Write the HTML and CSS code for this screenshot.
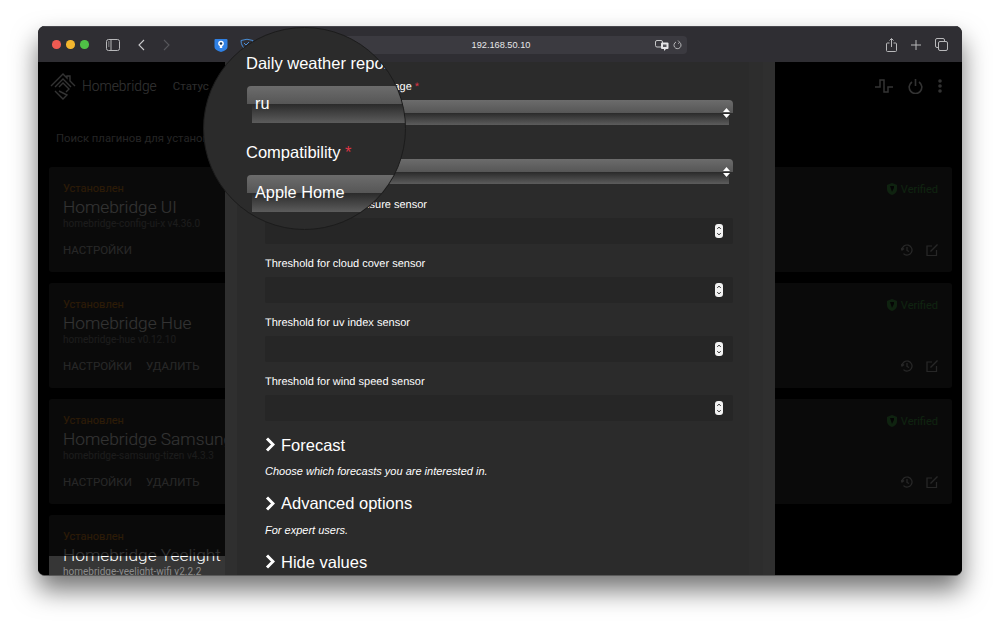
FILE: index.html
```html
<!DOCTYPE html>
<html lang="ru">
<head>
    <meta charset="UTF-8">
    <meta name="viewport" content="width=device-width, initial-scale=1.0">
    <title>Homebridge</title>
    <link rel="stylesheet" href="styles.css">
</head>
<body>
    <div class="window">
        <!-- браузерная панель -->
        <div class="toolbar">
            <div class="lights">
                <span class="light red"></span>
                <span class="light yellow"></span>
                <span class="light green"></span>
            </div>
            <svg class="tb-sidebar" width="14" height="12" viewBox="0 0 14 12" fill="none" stroke="#b8b8ba"><rect x="0.5" y="0.5" width="13" height="11" rx="2"/><path d="M5 .5v11"/><path d="M2 3h1.5M2 5h1.5M2 7h1.5" stroke-width=".8"/></svg>
            <svg class="tb-back" width="7" height="12" viewBox="0 0 7 12" fill="none" stroke="#c8c8ca" stroke-width="1.1"><path d="M6 1 1 6l5 5"/></svg>
            <svg class="tb-forward" width="7" height="12" viewBox="0 0 7 12" fill="none" stroke="#56565a" stroke-width="1.1"><path d="m1 1 5 5-5 5"/></svg>
            <svg class="tb-bitwarden" width="14" height="14" viewBox="0 0 14 14"><path d="M1.500 1h11q1 0 1 1v7q0 3-6.500 5Q.5 12 .5 9V2q0-1 1-1z" fill="#2f80e4"/><circle cx="7" cy="5.500" r="2.800" fill="#fff"/><path d="M5.800 6.500h2.400v3.500H5.800z" fill="#fff"/><circle cx="7" cy="5.500" r="1.300" fill="#10335c"/></svg>
            <svg class="tb-shield" width="14" height="13" viewBox="0 0 14 13" fill="none" stroke="#4a8fd8"><path d="M1 2.500Q7 0 13 2.500 13 9 7 12 1 9 1 2.500z"/><path d="m4 5 2 2 3-3"/></svg>
            <div class="url-bar">
                <span class="url">192.168.50.10</span>
                <svg class="url-translate" width="14" height="11" viewBox="0 0 14 11"><rect x="0.500" y="0.500" width="7" height="6.500" rx="1.500" fill="none" stroke="#c8c8ca"/><rect x="6" y="2.500" width="7.500" height="6.500" rx="1" fill="#e4e4e6"/><path d="M9 9v2l2-2z" fill="#e4e4e6"/><path d="M8 4.500h3.500v2.500H8z" fill="#55555a"/></svg>
                <svg class="url-reload" width="9" height="10" viewBox="0 0 9 10" fill="none" stroke="#b8b8ba"><path d="M6.500 2.300A3.500 3.500 0 1 1 3 2"/><path d="M5 .5l1.700 1.800L5 3.800" stroke-width=".8"/></svg>
            </div>
            <svg class="tb-share" width="11" height="14" viewBox="0 0 11 14" fill="none" stroke="#b8b8ba"><path d="M3.500 5H1.500q-1 0-1 1v6.500q0 1 1 1h8q1 0 1-1V6q0-1-1-1h-2"/><path d="M5.500 9V.8M3.500 2.500l2-2 2 2"/></svg>
            <svg class="tb-plus" width="10" height="10" viewBox="0 0 10 10" stroke="#b8b8ba"><path d="M5 0v10M0 5h10"/></svg>
            <svg class="tb-tabs" width="13" height="13" viewBox="0 0 13 13" fill="none" stroke="#b8b8ba"><rect x="3.500" y="3.500" width="9" height="9" rx="1.500"/><path d="M3 9.500H2q-1.500 0-1.500-1.500V2Q.5.5 2 .5h6Q9.500.5 9.500 2v1"/></svg>
        </div>

        <div class="page">
            <div class="nav">
                <svg class="logo" width="26" height="27" viewBox="0 0 26 27" fill="none" stroke="#fff" stroke-width="1.400"><path d="M1 13 13 1l4 4V3h3v5l5 5"/><path d="m5 14 8-8 8 8"/><path d="m9 14 4-4 6 6-3 3"/><path d="m5 18 8 8 4-4-8-4"/></svg>
                <span class="brand">Homebridge</span>
                <span class="nav-link">Статус</span>
                <div class="nav-icons">
                    <svg width="18" height="15" viewBox="0 0 18 15" fill="none" stroke="#fff" stroke-width="1.500"><path d="M0 8h5V1h4v12h4V8h5"/></svg>
                    <svg width="15" height="15" viewBox="0 0 15 15" fill="none" stroke="#fff" stroke-width="1.600"><path d="M4 3a6.300 6.300 0 1 0 7 0"/><path d="M7.500 0v7"/></svg>
                    <svg width="4" height="14" viewBox="0 0 4 14" fill="#fff"><circle cx="2" cy="2" r="1.800"/><circle cx="2" cy="7" r="1.800"/><circle cx="2" cy="12" r="1.800"/></svg>
                </div>
            </div>

            <div class="search">Поиск плагинов для установки</div>

            <div class="card">
                <div class="card-row">
                    <span class="status">Установлен</span>
                    <span class="verified"><svg width="10" height="12" viewBox="0 0 10 12"><path d="M0 2 5 0l5 2v4q0 4-5 6-5-2-5-6z" fill="#4caf50"/><path d="M3 3h4v2L5 9z" fill="#1c1c1c"/></svg>Verified</span>
                </div>
                <div class="plugin-name">Homebridge UI</div>
                <div class="plugin-sub">homebridge-config-ui-x v4.36.0</div>
                <div class="card-row card-actions">
                    <div class="actions"><span>Настройки</span></div>
                    <div class="action-icons">
                        <svg width="12" height="12" viewBox="0 0 12 12" fill="none" stroke="#c4c4c4" stroke-width="1.200"><path d="M1 6a5 5 0 1 1 1.500 3.600"/><path d="M0 4l1 2 2-1.500M6 3v3.500l2 1"/></svg>
                        <svg width="12" height="12" viewBox="0 0 12 12" fill="none" stroke="#c4c4c4" stroke-width="1.200"><path d="M6 2H1v9.500h9.500V6"/><path d="M4.500 7.500 11.500.5"/></svg>
                    </div>
                </div>
            </div>

            <div class="card">
                <div class="card-row">
                    <span class="status">Установлен</span>
                    <span class="verified"><svg width="10" height="12" viewBox="0 0 10 12"><path d="M0 2 5 0l5 2v4q0 4-5 6-5-2-5-6z" fill="#4caf50"/><path d="M3 3h4v2L5 9z" fill="#1c1c1c"/></svg>Verified</span>
                </div>
                <div class="plugin-name">Homebridge Hue</div>
                <div class="plugin-sub">homebridge-hue v0.12.10</div>
                <div class="card-row card-actions">
                    <div class="actions"><span>Настройки</span><span>Удалить</span></div>
                    <div class="action-icons">
                        <svg width="12" height="12" viewBox="0 0 12 12" fill="none" stroke="#c4c4c4" stroke-width="1.200"><path d="M1 6a5 5 0 1 1 1.500 3.600"/><path d="M0 4l1 2 2-1.500M6 3v3.500l2 1"/></svg>
                        <svg width="12" height="12" viewBox="0 0 12 12" fill="none" stroke="#c4c4c4" stroke-width="1.200"><path d="M6 2H1v9.500h9.500V6"/><path d="M4.500 7.500 11.500.5"/></svg>
                    </div>
                </div>
            </div>

            <div class="card">
                <div class="card-row">
                    <span class="status">Установлен</span>
                    <span class="verified"><svg width="10" height="12" viewBox="0 0 10 12"><path d="M0 2 5 0l5 2v4q0 4-5 6-5-2-5-6z" fill="#4caf50"/><path d="M3 3h4v2L5 9z" fill="#1c1c1c"/></svg>Verified</span>
                </div>
                <div class="plugin-name">Homebridge Samsung Tizen</div>
                <div class="plugin-sub">homebridge-samsung-tizen v4.3.3</div>
                <div class="card-row card-actions">
                    <div class="actions"><span>Настройки</span><span>Удалить</span></div>
                    <div class="action-icons">
                        <svg width="12" height="12" viewBox="0 0 12 12" fill="none" stroke="#c4c4c4" stroke-width="1.200"><path d="M1 6a5 5 0 1 1 1.500 3.600"/><path d="M0 4l1 2 2-1.500M6 3v3.500l2 1"/></svg>
                        <svg width="12" height="12" viewBox="0 0 12 12" fill="none" stroke="#c4c4c4" stroke-width="1.200"><path d="M6 2H1v9.500h9.500V6"/><path d="M4.500 7.500 11.500.5"/></svg>
                    </div>
                </div>
            </div>

            <div class="card card-short">
                <div class="card-row">
                    <span class="status">Установлен</span>
                </div>
                <div class="plugin-name">Homebridge Yeelight WiFi</div>
                <div class="plugin-sub">homebridge-yeelight-wifi v2.2.2</div>
            </div>

            <div class="backdrop"></div>

            <!-- окно настроек плагина -->
            <div class="modal">
                <div class="modal-body">
                    <label class="field-label indent">Daily weather report language <span class="req">*</span></label>
                    <div class="select">
                        <svg class="select-arrows" width="7" height="10" viewBox="0 0 7 10" fill="#fff"><path d="M3.500 0 7 4H0zM3.500 10 0 6h7z"/></svg>
                    </div>
                    <label class="field-label indent">Compatibility <span class="req">*</span></label>
                    <div class="select">
                        <svg class="select-arrows" width="7" height="10" viewBox="0 0 7 10" fill="#fff"><path d="M3.500 0 7 4H0zM3.500 10 0 6h7z"/></svg>
                    </div>

                    <label class="field-label indent">Threshold for air pressure sensor</label>
                    <div class="number-input">
                        <svg width="8" height="14" viewBox="0 0 8 14"><rect width="8" height="14" rx="3" fill="#f2f2f2"/><path d="m2.200 5 1.800-2 1.800 2M2.200 9l1.800 2 1.800-2" fill="none" stroke="#444"/></svg>
                    </div>
                    <label class="field-label indent">Threshold for cloud cover sensor</label>
                    <div class="number-input">
                        <svg width="8" height="14" viewBox="0 0 8 14"><rect width="8" height="14" rx="3" fill="#f2f2f2"/><path d="m2.200 5 1.800-2 1.800 2M2.200 9l1.800 2 1.800-2" fill="none" stroke="#444"/></svg>
                    </div>
                    <label class="field-label indent">Threshold for uv index sensor</label>
                    <div class="number-input">
                        <svg width="8" height="14" viewBox="0 0 8 14"><rect width="8" height="14" rx="3" fill="#f2f2f2"/><path d="m2.200 5 1.800-2 1.800 2M2.200 9l1.800 2 1.800-2" fill="none" stroke="#444"/></svg>
                    </div>
                    <label class="field-label indent">Threshold for wind speed sensor</label>
                    <div class="number-input">
                        <svg width="8" height="14" viewBox="0 0 8 14"><rect width="8" height="14" rx="3" fill="#f2f2f2"/><path d="m2.200 5 1.800-2 1.800 2M2.200 9l1.800 2 1.800-2" fill="none" stroke="#444"/></svg>
                    </div>

                    <div class="section-title first">
                        <svg width="10" height="15" viewBox="0 0 10 15" fill="none" stroke="#fff" stroke-width="3"><path d="m2 1.500 6 6-6 6"/></svg>Forecast
                    </div>
                    <p class="section-hint">Choose which forecasts you are interested in.</p>
                    <div class="section-title">
                        <svg width="10" height="15" viewBox="0 0 10 15" fill="none" stroke="#fff" stroke-width="3"><path d="m2 1.500 6 6-6 6"/></svg>Advanced options
                    </div>
                    <p class="section-hint">For expert users.</p>
                    <div class="section-title">
                        <svg width="10" height="15" viewBox="0 0 10 15" fill="none" stroke="#fff" stroke-width="3"><path d="m2 1.500 6 6-6 6"/></svg>Hide values
                    </div>
                </div>
            </div>
        </div>

        <!-- лупа поверх окна -->
        <div class="lens">
            <div class="lens-title">Daily weather report language</div>
            <div class="lens-select">ru</div>
            <div class="lens-title lens-second">Compatibility <span class="req">*</span></div>
            <div class="lens-select">Apple Home</div>
        </div>
    </div>
</body>
</html>
```

FILE: styles.css
```css
* {
    box-sizing: border-box;
}
body {
    margin: 0;
    height: 627px;
    overflow: hidden;
    background-color: #fff;
    font-family: "Liberation Sans", Arial, sans-serif;
}
svg {
    display: block;
    flex-shrink: 0;
}
.window {
    position: relative;
    width: 924px;
    height: 550px;
    margin: 26px 0 0 38px;
    display: flex;
    flex-direction: column;
    border-radius: 7px;
    overflow: hidden;
    border-bottom: 1px solid #5a5a5a;
    background-color: #000;
    box-shadow: 0 14px 26px rgba(0, 0, 0, 0.55);
}
.toolbar {
    height: 36px;
    flex-shrink: 0;
    display: flex;
    align-items: center;
    padding-left: 14px;
    padding-right: 14px;
    background-color: #2f2e33;
    border-top: 1px solid #48474d;
}
.lights {
    display: flex;
    gap: 5.5px;
}
.light {
    width: 8.5px;
    height: 8.5px;
    border-radius: 50%;
}
.red { background-color: #ee5a52; }
.yellow { background-color: #f4b62e; }
.green { background-color: #4fc146; }
.tb-sidebar { margin-left: 17px; }
.tb-back { margin-left: 18px; }
.tb-forward { margin-left: 18px; }
.tb-bitwarden { margin-left: 44px; }
.tb-shield { margin-left: 12px; }
.url-bar {
    position: relative;
    width: 372px;
    height: 18px;
    margin-left: 61.5px;
    display: flex;
    align-items: center;
    justify-content: center;
    border-radius: 4px;
    background-color: #3b3a40;
}
.url {
    color: #e8e8ea;
    font-size: 9.2px;
}
.url-translate {
    position: absolute;
    right: 18px;
    top: 4px;
}
.url-reload {
    position: absolute;
    right: 5px;
    top: 4px;
}
.tb-share { margin-left: auto; }
.tb-plus { margin-left: 14px; }
.tb-tabs { margin-left: 14px; }

.page {
    position: relative;
    flex: 1;
    overflow: hidden;
    padding: 0 10px 0 11px;
    background-color: #000;
}
.nav {
    height: 48px;
    display: flex;
    align-items: center;
    color: #fff;
}
.logo {
    margin-left: 1px;
}
.brand {
    margin-left: 6px;
    font-family: Roboto, sans-serif;
    font-weight: 300;
    font-size: 13.8px;
}
.nav-link {
    margin-left: 16px;
    font-family: Roboto, sans-serif;
    font-size: 11.5px;
    color: #ddd;
}
.nav-icons {
    margin-left: auto;
    display: flex;
    align-items: center;
    gap: 15px;
    padding-right: 10px;
}
.search {
    height: 57px;
    padding: 22px 0 0 7px;
    color: #b4b4b4;
    font-family: Roboto, sans-serif;
    font-size: 11.3px;
}
.card {
    height: 105px;
    margin-bottom: 11px;
    padding: 15px 14px 14px;
    border-radius: 3px;
    background-color: #363636;
}
.card-short {
    width: 300px;
    height: 60px;
    border-radius: 3px 3px 0 0;
    margin-bottom: 0;
}
.card-row {
    display: flex;
    justify-content: space-between;
    align-items: center;
}
.status {
    height: 14px;
    line-height: 14px;
    color: #e08a20;
    font-family: Roboto, sans-serif;
    font-size: 11px;
}
.verified {
    display: flex;
    align-items: center;
    gap: 4px;
    color: #4caf50;
    font-family: Roboto, sans-serif;
    font-size: 11px;
}
.plugin-name {
    height: 22px;
    line-height: 22px;
    color: #fff;
    font-family: Roboto, sans-serif;
    font-weight: 300;
    font-size: 17.3px;
    white-space: nowrap;
}
.plugin-sub {
    height: 12px;
    line-height: 12px;
    color: #8c8c8c;
    font-family: Roboto, sans-serif;
    font-size: 10px;
}
.card-actions {
    margin-top: 13px;
    height: 14px;
}
.actions {
    display: flex;
    gap: 14px;
    color: #c4c4c4;
    font-family: Roboto, sans-serif;
    font-size: 11.5px;
    text-transform: uppercase;
}
.action-icons {
    display: flex;
    gap: 13px;
}
.backdrop {
    position: absolute;
    top: 0;
    left: 0;
    right: 0;
    bottom: 19px;
    background-color: rgba(0, 0, 0, 0.8);
}
.modal {
    position: absolute;
    top: 0;
    bottom: 0;
    left: 187px;
    width: 550px;
    padding: 0 12px;
    background-color: #2f2f2f;
}
.modal-body {
    height: 100%;
    padding: 17px 16px 0 14px;
    overflow: hidden;
    color: #fff;
    background-color: #2b2b2b;
    border-right: 14px solid #2d2d2d;
}
.field-label {
    display: block;
    height: 14px;
    margin-top: 13px;
    margin-bottom: 7px;
    line-height: 16px;
    font-size: 11px;
    text-rendering: geometricPrecision;
}
.field-label:first-child {
    margin-top: 0;
}
.indent {
    padding-left: 14px;
}
.indent + .number-input {
    margin-left: 14px;
}
.req {
    color: #dc3545;
}
.select {
    position: relative;
    height: 25px;
    border-radius: 4px 4px 0 0;
    background:
        linear-gradient(#6c6c6c, #565656) top / 100% 13px no-repeat,
        linear-gradient(#2a2a2a, #5c5c5c) 4px bottom / calc(100% - 8px) 12px no-repeat;
}
.select-arrows {
    position: absolute;
    right: 3px;
    top: 8px;
}
.number-input {
    height: 26px;
    display: flex;
    align-items: center;
    justify-content: flex-end;
    padding-right: 10px;
    border-radius: 2px;
    background-color: #262626;
}
.number-input + .field-label {
    margin-top: 12px;
}
.section-title {
    height: 20px;
    margin-top: 15px;
    display: flex;
    align-items: center;
    gap: 6px;
    padding-left: 14px;
    line-height: 20px;
    font-size: 16.5px;
}
.section-title.first {
    margin-top: 13.5px;
}
.section-hint {
    height: 14px;
    margin: 9.5px 0 0 14px;
    line-height: 14px;
    font-size: 11px;
    font-style: italic;
}
.lens {
    position: absolute;
    left: 165px;
    top: 1px;
    width: 203px;
    height: 203px;
    padding: 25px 0 0 42px;
    border-radius: 50%;
    overflow: hidden;
    color: #fff;
    background-color: #2b2b2b;
    border: 1px solid #1c1c1c;
}
.lens-title {
    height: 20px;
    line-height: 20px;
    font-size: 16.5px;
    white-space: nowrap;
}
.lens-second {
    margin-top: 19px;
}
.lens-select {
    width: 200px;
    height: 37px;
    margin-top: 13px;
    margin-left: 1px;
    padding-left: 8px;
    line-height: 34px;
    font-size: 16.3px;
    border-radius: 4px 0 0 0;
    background:
        linear-gradient(#6c6c6c, #565656) top / 100% 18px no-repeat,
        linear-gradient(#2a2a2a, #5c5c5c) 5px bottom / 100% 19px no-repeat;
}
```
